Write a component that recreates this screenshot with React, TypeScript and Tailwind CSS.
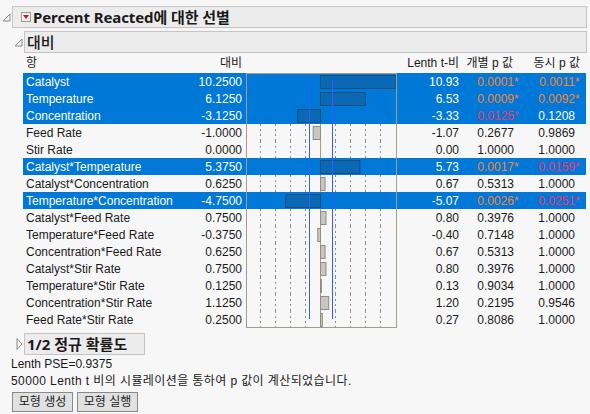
import React from 'react';

type Star = 'o' | 'r' | undefined;

interface Term {
  name: string;
  contrast: number;
  t: string;
  p1: string;
  s1?: Star;
  p2: string;
  s2?: Star;
  hl?: boolean;
}

const terms: Term[] = [
  { name: 'Catalyst', contrast: 10.25, t: '10.93', p1: '0.0001', s1: 'o', p2: '0.0011', s2: 'o', hl: true },
  { name: 'Temperature', contrast: 6.125, t: '6.53', p1: '0.0009', s1: 'o', p2: '0.0092', s2: 'o', hl: true },
  { name: 'Concentration', contrast: -3.125, t: '-3.33', p1: '0.0125', s1: 'r', p2: '0.1208', hl: true },
  { name: 'Feed Rate', contrast: -1.0, t: '-1.07', p1: '0.2677', p2: '0.9869' },
  { name: 'Stir Rate', contrast: 0, t: '0.00', p1: '1.0000', p2: '1.0000' },
  { name: 'Catalyst*Temperature', contrast: 5.375, t: '5.73', p1: '0.0017', s1: 'o', p2: '0.0159', s2: 'r', hl: true },
  { name: 'Catalyst*Concentration', contrast: 0.625, t: '0.67', p1: '0.5313', p2: '1.0000' },
  { name: 'Temperature*Concentration', contrast: -4.75, t: '-5.07', p1: '0.0026', s1: 'o', p2: '0.0251', s2: 'r', hl: true },
  { name: 'Catalyst*Feed Rate', contrast: 0.75, t: '0.80', p1: '0.3976', p2: '1.0000' },
  { name: 'Temperature*Feed Rate', contrast: -0.375, t: '-0.40', p1: '0.7148', p2: '1.0000' },
  { name: 'Concentration*Feed Rate', contrast: 0.625, t: '0.67', p1: '0.5313', p2: '1.0000' },
  { name: 'Catalyst*Stir Rate', contrast: 0.75, t: '0.80', p1: '0.3976', p2: '1.0000' },
  { name: 'Temperature*Stir Rate', contrast: 0.125, t: '0.13', p1: '0.9034', p2: '1.0000' },
  { name: 'Concentration*Stir Rate', contrast: 1.125, t: '1.20', p1: '0.2195', p2: '0.9546' },
  { name: 'Feed Rate*Stir Rate', contrast: 0.25, t: '0.27', p1: '0.8086', p2: '1.0000' },
];

const dashes = [14.5, 29.5, 44.5, 59.5, 89.5, 104.5, 119.5, 134.5];
const ZERO = 74.5;
const SCALE = 7.32;

const starColor = (s: Star, hl?: boolean) => {
  if (s === 'o') return 'text-[#f5852f]';
  if (s === 'r') return 'text-[#f0356a]';
  return hl ? 'text-white' : 'text-[#1a1a1a]';
};

// Open disclosure triangle (◢ outline)
const OpenTri = () => (
  <svg width="9" height="9" className="block">
    <polygon points="8,1 8,8 1,8" fill="#f4f4f4" stroke="#8a8a8a" strokeWidth="1" />
  </svg>
);

const ClosedTri = () => (
  <svg width="7" height="12" className="block">
    <polygon points="1,0.5 6,6 1,11.5" fill="#f4f4f4" stroke="#8a8a8a" strokeWidth="1" />
  </svg>
);

const ChartCell: React.FC<{ term: Term; i: number; last: number }> = ({ term, i, last }) => {
  const w = Math.abs(term.contrast) * SCALE;
  const x = term.contrast >= 0 ? ZERO : ZERO - w;
  return (
    <svg width="151" height="17" className="block shrink-0">
      {!term.hl &&
        dashes.map((d) => (
          <line key={d} x1={d} x2={d} y1={0} y2={17} stroke="#8e8e8e" strokeDasharray="2 3" />
        ))}
      {!term.hl && <line x1={ZERO} x2={ZERO} y1={0} y2={17} stroke="#a0a090" />}
      {w > 0 && (
        <rect
          x={x}
          y={2.5}
          width={w}
          height={13}
          fill={term.hl ? '#0a68b4' : '#c8c8c0'}
          stroke={term.hl ? '#1d4e78' : '#8e8e84'}
        />
      )}
      <line x1={63.5} x2={63.5} y1={i === 0 ? 8 : 0} y2={i === last ? 8 : 17} stroke="#2f5dff" />
      <line x1={86.5} x2={86.5} y1={i === 0 ? 8 : 0} y2={i === last ? 8 : 17} stroke="#2f5dff" />
      <line x1={0.5} x2={0.5} y1={0} y2={17} stroke="#a0a090" />
      <line x1={150.5} x2={150.5} y1={0} y2={17} stroke="#a0a090" />
      {i === 0 && <line x1={0} x2={151} y1={0.5} y2={0.5} stroke="#a0a090" />}
      {i === last && <line x1={0} x2={151} y1={16.5} y2={16.5} stroke="#a0a090" />}
    </svg>
  );
};

export default function App() {
  const last = terms.length - 1;
  return (
    <div className="w-[590px] h-[414px] bg-[#f7f7f7] text-[#1a1a1a] font-['Liberation_Sans','Noto_Sans_CJK_KR',sans-serif] text-[12px] overflow-hidden pt-[6px]">
      {/* title outline */}
      <div className="flex items-center">
        <div className="w-[12px] pl-[2px]">
          <OpenTri />
        </div>
        <div className="flex-1 mr-[3px] h-[22px] border border-[#c4c4c4] bg-[#ececec] flex items-center pl-[8px]">
          <div className="w-[10px] h-[10px] border border-[#9a9a9a] bg-[#f2f2f2] flex items-center justify-center mr-[2px]">
            <svg width="6" height="4" className="block">
              <polygon points="0,0 6,0 3,4" fill="#d4102a" />
            </svg>
          </div>
          <span className="font-['Noto_Sans','Noto_Sans_CJK_KR',sans-serif] font-bold text-[15px] leading-none tracking-[-0.1px]">
            Percent Reacted에 대한 선별
          </span>
        </div>
      </div>

      {/* contrast outline */}
      <div className="flex items-center mt-[3px]">
        <div className="w-[24px] pl-[14px]">
          <OpenTri />
        </div>
        <div className="flex-1 mr-[3px] h-[22px] border border-[#c4c4c4] bg-[#ececec] flex items-center pl-[2px]">
          <span className="font-['Noto_Sans','Noto_Sans_CJK_KR',sans-serif] font-medium text-[15px] leading-none">대비</span>
        </div>
      </div>

      {/* column headers */}
      <div className="flex h-[20px] items-center ml-[23px]">
        <div className="w-[220px] flex justify-between pl-[3px] pr-[1px]">
          <span>항</span>
          <span>대비</span>
        </div>
        <div className="w-[154px]" />
        <div className="w-[63px] text-right pr-[1px]">Lenth t-비</div>
        <div className="w-[61px] text-right pr-[8px]">개별 p 값</div>
        <div className="w-[61px] text-right pr-[2px]">동시 p 값</div>
      </div>

      {/* term rows */}
      <div className="ml-[23px] w-[563px]">
        {terms.map((term, i) => (
          <div
            key={term.name}
            className={`flex h-[17px] items-center leading-none ${term.hl ? 'bg-[#0078d7] text-white' : ''}`}
          >
            <div className="w-[220px] flex justify-between pl-[3px] pr-[1px] whitespace-nowrap">
              <span>{term.name}</span>
              <span>{term.contrast.toFixed(4)}</span>
            </div>
            <div className="w-[3px]" />
            <ChartCell term={term} i={i} last={last} />
            <div className="w-[63px] text-right pr-[1px]">{term.t}</div>
            <div className={`w-[54px] text-right ${starColor(term.s1, term.hl)}`}>{term.p1}</div>
            <div className={`w-[7px] ${starColor(term.s1, term.hl)}`}>{term.s1 ? '*' : ''}</div>
            <div className={`w-[54px] text-right ${starColor(term.s2, term.hl)}`}>{term.p2}</div>
            <div className={`w-[7px] ${starColor(term.s2, term.hl)}`}>{term.s2 ? '*' : ''}</div>
          </div>
        ))}
      </div>

      {/* half normal plot outline (closed) */}
      <div className="flex items-center mt-[5px]">
        <div className="w-[24px] pl-[16px]">
          <ClosedTri />
        </div>
        <div className="w-[121px] h-[22px] border border-[#c4c4c4] bg-[#ececec] flex items-center pl-[2px]">
          <span className="font-['Noto_Sans','Noto_Sans_CJK_KR',sans-serif] font-bold text-[15px] leading-none">1/2 정규 확률도</span>
        </div>
      </div>

      <div className="pl-[11px] mt-[1px] leading-[17px]">
        <div>Lenth PSE=0.9375</div>
        <div className="tracking-[0.4px]">50000 Lenth t 비의 시뮬레이션을 통하여 p 값이 계산되었습니다.</div>
      </div>

      <div className="flex gap-[4px] pl-[12px] mt-[2px]">
        <button className="h-[20px] w-[61px] border border-[#8a8a8a] bg-[#e1e1e1] text-[12px] leading-none">
          모형 생성
        </button>
        <button className="h-[20px] w-[61px] border border-[#8a8a8a] bg-[#e1e1e1] text-[12px] leading-none">
          모형 실행
        </button>
      </div>
    </div>
  );
}
